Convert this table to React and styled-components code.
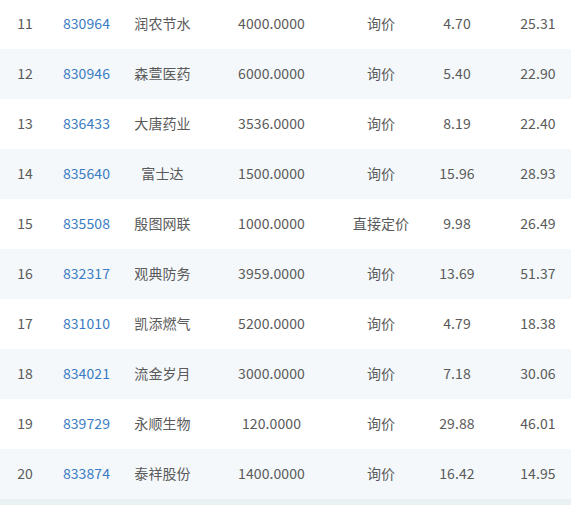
import React from "react";
import styled, { createGlobalStyle } from "styled-components";

const GlobalStyle = createGlobalStyle`
  html, body {
    margin: 0;
    padding: 0;
    background: #fff;
  }
  body {
    font-family: "Noto Sans CJK SC", "Noto Sans", sans-serif;
    font-size: 14px;
    color: #555;
    overflow: hidden;
  }
`;

const Table = styled.div`
  margin-top: -1px;
  width: 571px;
  overflow: hidden;
  background: #eaf1f5;
  min-height: 520px;
`;

const Row = styled.div`
  display: grid;
  grid-template-columns: 50px 73px 79px 139px 80px 72px 90px;
  height: 50px;
  align-items: center;
  padding-bottom: 2px;
  box-sizing: border-box;
  background: ${(p) => (p.$alt ? "#f4f8fb" : "#fff")};
`;

const Cell = styled.div`
  text-align: center;
  white-space: nowrap;
  letter-spacing: 0.1px;
  color: ${(p) => (p.$link ? "#3a7cc3" : "#5a5a5a")};
`;

const rows = [
  [11, "830964", "润农节水", "4000.0000", "询价", "4.70", "25.31"],
  [12, "830946", "森萱医药", "6000.0000", "询价", "5.40", "22.90"],
  [13, "836433", "大唐药业", "3536.0000", "询价", "8.19", "22.40"],
  [14, "835640", "富士达", "1500.0000", "询价", "15.96", "28.93"],
  [15, "835508", "殷图网联", "1000.0000", "直接定价", "9.98", "26.49"],
  [16, "832317", "观典防务", "3959.0000", "询价", "13.69", "51.37"],
  [17, "831010", "凯添燃气", "5200.0000", "询价", "4.79", "18.38"],
  [18, "834021", "流金岁月", "3000.0000", "询价", "7.18", "30.06"],
  [19, "839729", "永顺生物", "120.0000", "询价", "29.88", "46.01"],
  [20, "833874", "泰祥股份", "1400.0000", "询价", "16.42", "14.95"],
];

export default function App() {
  return (
    <>
      <GlobalStyle />
      <Table>
        {rows.map((r, i) => (
          <Row key={r[0]} $alt={i % 2 === 1}>
            <Cell>{r[0]}</Cell>
            <Cell $link>{r[1]}</Cell>
            <Cell>{r[2]}</Cell>
            <Cell>{r[3]}</Cell>
            <Cell>{r[4]}</Cell>
            <Cell>{r[5]}</Cell>
            <Cell>{r[6]}</Cell>
          </Row>
        ))}
      </Table>
    </>
  );
}
